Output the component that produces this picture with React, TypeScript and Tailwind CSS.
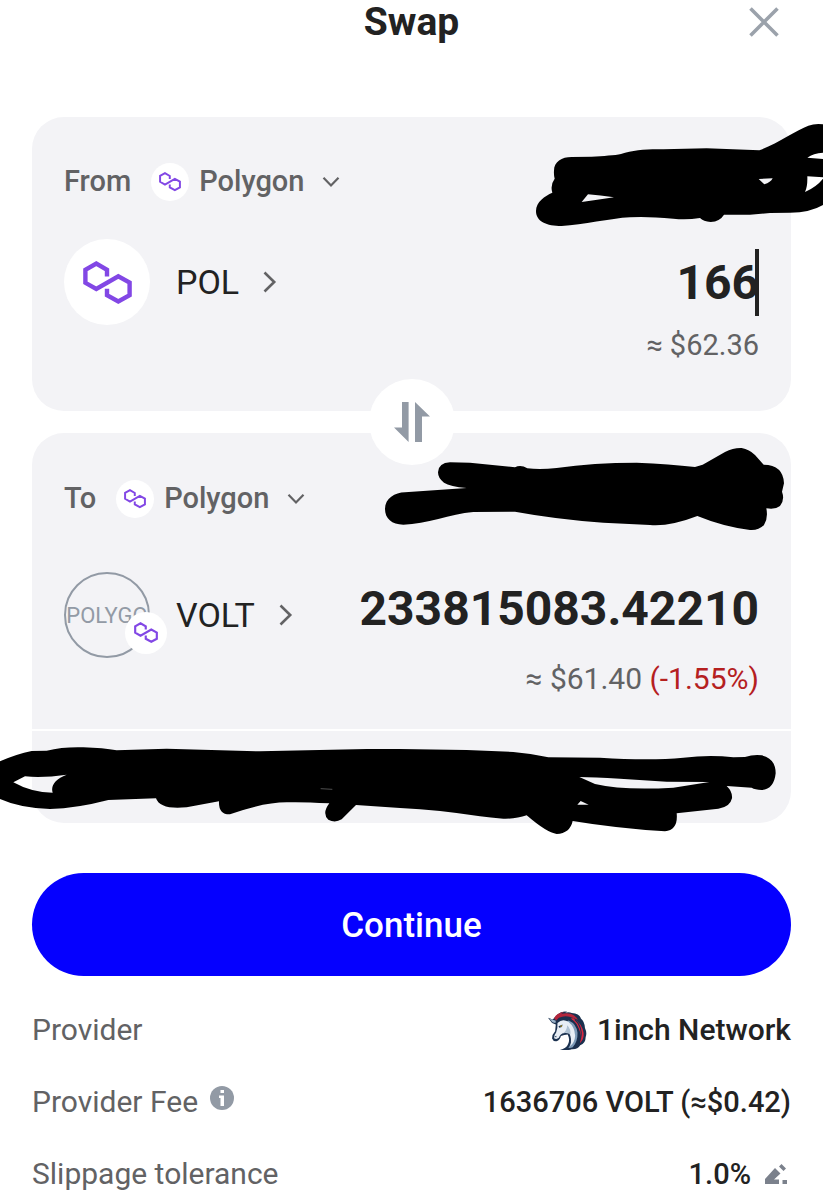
import React, { useState } from 'react';

interface IconProps {
  className?: string;
}

const PolygonLogo: React.FC<IconProps> = ({ className }) => (
  <svg viewBox="0 0 49 43" className={className} fill="none" stroke="#8247e5" strokeWidth="4.4" aria-hidden="true">
    <path d="M24 15.5V8.8L13.3 2.6L2.4 8.8V21.8L13.3 28L35.3 15.3L46.6 21.6V34.2L35.3 40.4L24 34.2V27.8" />
  </svg>
);

const ChevronDown: React.FC<IconProps> = ({ className }) => (
  <svg viewBox="0 0 18 12" className={className} fill="none" stroke="#626264" strokeWidth="2.2" aria-hidden="true">
    <path d="M1.5 1.8L9 9.5L16.5 1.8" />
  </svg>
);

const ChevronRight: React.FC<IconProps> = ({ className }) => (
  <svg viewBox="0 0 14 22" className={className} fill="none" stroke="#626264" strokeWidth="2.6" aria-hidden="true">
    <path d="M1.5 1.5L11.2 11L1.5 20.5" />
  </svg>
);

const SwapIcon: React.FC<IconProps> = ({ className }) => (
  <svg viewBox="0 0 36 40" className={className} fill="#929aa5" aria-hidden="true">
    <path d="M8 0H14.6V40L0 25.5H8Z" />
    <path d="M21 0L36 14.5H28V40H21Z" />
  </svg>
);

const UnicornLogo: React.FC<IconProps> = ({ className }) => (
  <svg viewBox="0 0 115 120" className={className} aria-hidden="true">
    <path d="M14 28L28 13Q40 2 57 5L50 8Q63 5 70 9Q93 10 97 25Q108 34 109 53Q116 68 111 80Q111 98 95 104Q88 117 70 116Q52 121 35 118Q54 113 59 101Q66 87 58 72Q48 72 38 77Q36 89 25 92Q15 93 12 84Q12 72 21 63L23 43L12 38L0 23Z" fill="#1b314f" />
    <path d="M18 24Q25 9 47 5L39 12Q53 7 67 11Q82 16 88 29L66 21Q50 15 32 23L24 31Z" fill="#b3263c" />
    <path d="M75 24Q101 40 105 68Q107 86 94 98Q101 75 91 56Q84 39 67 25Z" fill="#d72740" />
    <path d="M61 31Q84 41 87 67Q88 92 73 110Q67 113 60 112Q76 90 69 65Q64 48 50 38Z" fill="#7d9bb8" />
    <path d="M28 38Q43 24 60 35Q79 50 80 76Q79 96 65 107Q72 85 63 69L48 67Q36 70 32 82Q25 88 18 83Q16 75 24 66Q29 52 28 38Z" fill="#e8eef5" />
    <path d="M44 70Q55 62 57 45Q68 57 66 72Q58 64 44 70Z" fill="#adc0d2" />
    <path d="M4 25L23 32L22 38L13 36Z" fill="#9cb4cb" />
    <path d="M31 48L43 43L41 50L33 52Z" fill="#1b314f" />
    <path d="M36 47L42 45L39 50Z" fill="#ffc400" />
    <path d="M20 78L25 76L24 81Z" fill="#1b314f" />
    <path d="M79 28Q95 42 98 66Q99 84 90 96M63 26Q89 38 91 70Q91 94 78 108" fill="none" stroke="#1b314f" strokeWidth="3" />
  </svg>
);

const InfoIcon: React.FC<IconProps> = ({ className }) => (
  <svg viewBox="0 0 24 24" className={className} aria-hidden="true">
    <circle cx="12" cy="12" r="12" fill="#929aa5" />
    <path d="M10.5 4H14V7H10.5ZM9 9.5H14V20H10.5V12H9Z" fill="#fff" />
  </svg>
);

const EditIcon: React.FC<IconProps> = ({ className }) => (
  <svg viewBox="0 0 22 20" className={className} fill="#7b818c" aria-hidden="true">
    <path d="M0 15L10 4L15.5 9.5L9 15.5H14V20H0Z" />
    <path d="M14 2.5L16.5 0L21 4.5L18.5 7ZM17.5 16H22V20H17.5Z" />
  </svg>
);

interface NetworkRowProps {
  label: string;
  network: string;
}

const NetworkRow: React.FC<NetworkRowProps> = ({ label, network }) => (
  <div className="flex h-10 items-center text-[29px] font-medium text-[#626264]">
    <span>{label}</span>
    <button type="button" className="ml-5 flex items-center">
      <span className="flex h-[38px] w-[38px] items-center justify-center rounded-full bg-white">
        <PolygonLogo className="w-[22px]" />
      </span>
      <span className="ml-[10px]">{network}</span>
      <ChevronDown className="ml-[18px] w-[18px]" />
    </button>
  </div>
);

interface DetailRowProps {
  label: React.ReactNode;
  children: React.ReactNode;
}

const DetailRow: React.FC<DetailRowProps> = ({ label, children }) => (
  <div className="flex h-9 items-center justify-between">
    <dt className="flex items-center text-3xl leading-9 text-[#626264]">{label}</dt>
    <dd className="flex items-center text-[29px] leading-9 font-medium text-[#222]">{children}</dd>
  </div>
);

const App: React.FC = () => {
  const [amount, setAmount] = useState('166');

  return (
    <div className="overflow-hidden bg-white px-8 pb-[6px] font-['Roboto',sans-serif] text-[#222]">
      {/* Header */}
      <header className="grid h-[42px] grid-cols-[1fr_auto_1fr] items-center">
        <h1 className="col-start-2 text-[39px] leading-[44px] font-bold">Swap</h1>
        <button type="button" aria-label="Close" className="mr-3 justify-self-end">
          <svg viewBox="0 0 30 30" className="w-[30px]" fill="none" stroke="#9ba2ab" strokeWidth="3.6" aria-hidden="true">
            <path d="M1.5 1.5L28.5 28.5M28.5 1.5L1.5 28.5" />
          </svg>
        </button>
      </header>

      <main>
        {/* From */}
        <section className="relative mt-[75px] rounded-[32px] bg-[#f3f3f6] px-8 pt-[45px] pb-12">
          <NetworkRow label="From" network="Polygon" />
          <div className="mt-[37px] flex h-[86px] items-center justify-between">
            <button type="button" className="flex items-center">
              <span className="flex h-[86px] w-[86px] items-center justify-center rounded-full bg-white">
                <PolygonLogo className="w-[49px]" />
              </span>
              <span className="ml-[26px] text-[34px]">POL</span>
              <ChevronRight className="ml-6 w-[14px]" />
            </button>
            <div className="flex items-center">
              <input
                type="text"
                inputMode="decimal"
                aria-label="Amount to swap"
                value={amount}
                onChange={(e) => setAmount(e.target.value)}
                className="w-60 bg-transparent text-right text-5xl font-bold outline-none"
              />
              <span className="-ml-1 h-[67px] w-1 bg-[#222]" />
            </div>
          </div>
          <p className="mt-[2px] text-right text-[29px] leading-9 text-[#626264]">≈ $62.36</p>
          <svg viewBox="0 0 909 390" className="pointer-events-none absolute -top-[7px] -right-8 w-[303px]" aria-hidden="true">
            <path
              fillRule="evenodd"
              d="M102 182C102 155 125 141 155 141L215 140C250 138 285 136 303 132C340 120 380 117 430 118L560 115L718 121C770 102 830 60 865 47Q885 40 909 43V128Q880 130 862 143L909 147V202L862 199Q863 230 855 246Q890 230 909 206V285Q870 308 810 308L750 309L690 314L612 314Q600 334 572 336Q550 335 540 324Q500 330 460 326Q380 319 330 322C270 325 190 345 125 348C80 348 48 335 48 303C48 275 75 258 97 248Q90 225 104 206Q101 195 102 182ZM204 253L185 276Q230 270 282 262Q240 256 204 253ZM716 207L758 205Q752 217 733 223Z"
            />
          </svg>
        </section>

        <div className="relative z-10 flex h-[22px] items-center justify-center">
          <button type="button" aria-label="Switch tokens" className="flex h-[86px] w-[86px] shrink-0 items-center justify-center rounded-full bg-white">
            <SwapIcon className="w-9" />
          </button>
        </div>

        {/* To */}
        <section className="relative rounded-[32px] bg-[#f3f3f6]">
          <div className="px-8 pt-[46px] pb-8">
            <NetworkRow label="To" network="Polygon" />
            <div className="mt-[53px] flex h-[86px] items-start justify-between">
              <button type="button" className="flex items-center">
                <span className="relative flex h-[86px] w-[86px] items-center">
                  <span className="flex h-[86px] w-[86px] items-center justify-center rounded-full border-2 border-[#929aa5] text-[22px] text-[#929aa5]">
                    POLYGO
                  </span>
                  <span className="absolute -right-[17px] bottom-1 flex h-[42px] w-[42px] items-center justify-center rounded-full bg-white">
                    <PolygonLogo className="w-6" />
                  </span>
                </span>
                <span className="ml-[26px] text-[34px]">VOLT</span>
                <ChevronRight className="ml-6 w-[14px]" />
              </button>
              <output className="text-5xl leading-[74px] font-bold">233815083.42210</output>
            </div>
            <p className="mt-[3px] text-right text-3xl leading-9 text-[#626264]">
              ≈ $61.40 <span className="text-[#b5201f]">(-1.55%)</span>
            </p>
          </div>
          <div className="relative h-[94px] border-t-2 border-white">
            <svg viewBox="0 0 2469 360" className="pointer-events-none absolute -top-[11px] -left-8 w-[calc(100%+64px)] max-w-none" aria-hidden="true">
              <path
                fillRule="evenodd"
                d="M0 124Q50 102 95 93L140 92Q190 80 250 82Q310 84 350 91L500 86L780 94L1100 87L1200 87L1400 90L1540 96Q1590 100 1645 112L1800 113Q1950 122 2050 113Q2130 104 2200 112L2235 111Q2260 103 2285 106Q2327 115 2327 160Q2322 208 2285 210Q2265 209 2255 203L2180 198Q2198 215 2196 235Q2190 262 2155 266L2030 280Q2035 330 1995 334Q1850 325 1718 303Q1710 340 1670 342Q1640 338 1580 286Q1550 297 1510 296Q1470 293 1440 289Q1320 270 1200 264L1068 255L1025 298Q1005 310 985 299Q965 280 988 250Q900 245 860 247Q790 247 690 283Q655 284 657 244L560 262Q480 270 468 235L325 240Q230 265 150 267Q60 264 0 237ZM40 187L75 169Q130 174 200 164Q148 185 158 218Q95 218 40 187ZM1738 171Q1780 172 1860 176L2000 185L2128 186L2020 203Q1870 212 1785 192ZM1732 254L1742 243L1766 254Z"
              />
              <path d="M962 206L997 208" stroke="#777" strokeWidth="2" />
            </svg>
          </div>
          <svg viewBox="0 0 1290 330" className="pointer-events-none absolute -top-[3px] -right-[9px] w-[430px]" aria-hidden="true">
            <path d="M204 127Q206 98 240 97L300 98L435 112Q452 103 472 115Q510 120 560 114Q670 98 800 98Q900 102 975 111L998 104L1065 66Q1090 53 1115 54Q1138 58 1155 75L1181 104Q1240 105 1242 160L1236 185Q1245 210 1230 228Q1215 240 1189 235Q1195 265 1182 285Q1165 302 1140 300Q1060 290 982 258Q900 290 840 285L700 278Q560 268 435 245L310 246C240 252 170 283 100 284C65 284 45 265 45 237C45 205 75 188 105 187L290 174Q240 170 222 158Q204 145 204 127Z" />
          </svg>
        </section>

        <button type="button" className="mt-[50px] h-[103px] w-full rounded-full bg-[#0500ff] pt-1 text-[35px] font-medium text-white">
          Continue
        </button>

        {/* Quote details */}
        <dl className="mt-9 flex flex-col gap-9">
          <DetailRow label="Provider">
            <UnicornLogo className="mr-[10px] w-[39px]" />
            <span className="text-3xl leading-9">1inch Network</span>
          </DetailRow>
          <DetailRow
            label={
              <>
                Provider Fee
                <button type="button" aria-label="About the provider fee" className="mb-2 ml-3">
                  <InfoIcon className="w-6" />
                </button>
              </>
            }
          >
            1636706 VOLT (≈$0.42)
          </DetailRow>
          <DetailRow label="Slippage tolerance">
            1.0%
            <button type="button" aria-label="Edit slippage tolerance" className="mr-1 ml-[14px]">
              <EditIcon className="w-[22px]" />
            </button>
          </DetailRow>
        </dl>
      </main>
    </div>
  );
};

export default App;
